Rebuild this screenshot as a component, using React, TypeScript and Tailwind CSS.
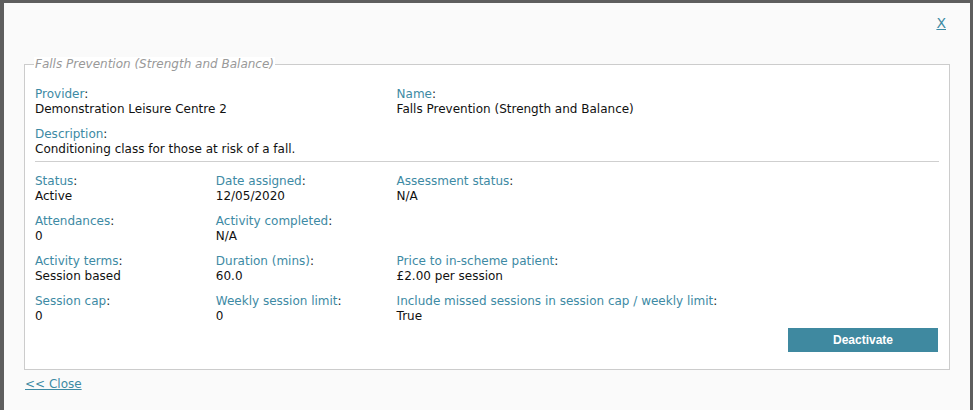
import React from "react";

const F = { fontFamily: '"DejaVu Sans", Tahoma, sans-serif' };

function Field({ label, value }: { label: string; value?: string }) {
  return (
    <div className="leading-[15px]">
      <div>
        <span className="text-[#3d8aa4]">{label}</span>
        <span className="text-[#222]">:</span>
      </div>
      <div className="text-[#111] h-[15px]">{value}</div>
    </div>
  );
}

export default function App() {
  return (
    <div className="w-[973px] h-[410px] bg-[#5e5e5e] pt-[3px] pl-[4px] pr-[3px] overflow-hidden">
      <div
        className="bg-[#fafafa] h-[407px] text-[12px] relative"
        style={F}
      >
        <div className="flex justify-end pr-[24px] pt-[10px] h-[54px]">
          <a className="text-[#3d8aa4] underline text-[14px] leading-[20px] cursor-pointer">X</a>
        </div>
        <fieldset className="mx-[20px] border border-[#cccccc] bg-white px-[10px] pb-[17px] pt-[0px]">
          <legend className="italic text-[#999] text-[12px] px-[1px] ml-[-1px] leading-[14px] bg-white" >
            Falls Prevention (Strength and Balance)
          </legend>
          <div className="grid grid-cols-5 mt-[16px]">
            <div className="col-span-2"><Field label="Provider" value="Demonstration Leisure Centre 2" /></div>
            <div className="col-span-3"><Field label="Name" value="Falls Prevention (Strength and Balance)" /></div>
          </div>
          <div className="mt-[10px]">
            <Field label="Description" value="Conditioning class for those at risk of a fall." />
          </div>
          <div className="h-px bg-[#cfcfcf] mt-[4px] mb-[12px]" />
          <div className="grid grid-cols-5 gap-y-[10px]">
            <Field label="Status" value="Active" />
            <Field label="Date assigned" value="12/05/2020" />
            <div className="col-span-3"><Field label="Assessment status" value="N/A" /></div>
            <Field label="Attendances" value="0" />
            <Field label="Activity completed" value="N/A" />
            <div className="col-span-3" />
            <Field label="Activity terms" value="Session based" />
            <Field label="Duration (mins)" value="60.0" />
            <div className="col-span-3"><Field label="Price to in-scheme patient" value="£2.00 per session" /></div>
            <Field label="Session cap" value="0" />
            <Field label="Weekly session limit" value="0" />
            <div className="col-span-3"><Field label="Include missed sessions in session cap / weekly limit" value="True" /></div>
          </div>
          <div className="flex justify-end mt-[4px] mr-[1px]">
            <button
              className="w-[150px] h-[24px] bg-[#3f89a0] text-white font-bold text-[12px]"
              style={{ fontFamily: '"Liberation Sans", Arial, sans-serif' }}
            >
              Deactivate
            </button>
          </div>
        </fieldset>
        <div className="px-[21px] pt-[5px]">
          <a className="text-[#3d8aa4] underline text-[12px] cursor-pointer">&lt;&lt; Close</a>
        </div>
      </div>
    </div>
  );
}
